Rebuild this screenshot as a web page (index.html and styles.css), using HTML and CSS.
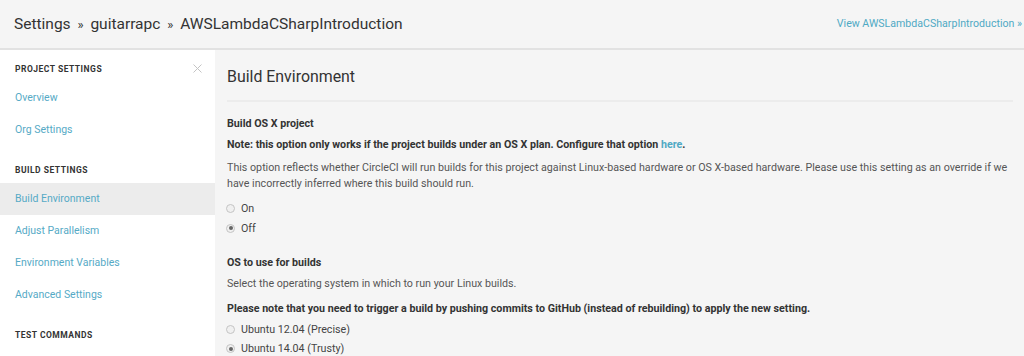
FILE: index.html
```html
<!DOCTYPE html>
<html lang="en">
<head>
    <meta charset="UTF-8">
    <title>Settings - AWSLambdaCSharpIntroduction</title>
    <link rel="stylesheet" href="styles.css">
</head>
<body>
<header class="topbar">
    <h1 class="crumbs">Settings <span class="sep">&raquo;</span> guitarrapc <span class="sep">&raquo;</span> AWSLambdaCSharpIntroduction</h1>
    <a class="view-link" href="#">View AWSLambdaCSharpIntroduction &raquo;</a>
</header>
<div class="layout">
    <aside class="sidebar">
        <div class="nav-title first">
            Project Settings
            <svg class="close" width="9" height="9" viewBox="0 0 9 9"><path d="M0.5 0.5L8.5 8.5M8.5 0.5L0.5 8.5" stroke="#c4c4c4" stroke-width="1"/></svg>
        </div>
        <a class="nav-item" href="#">Overview</a>
        <a class="nav-item" href="#">Org Settings</a>

        <div class="nav-title">Build Settings</div>
        <a class="nav-item active" href="#">Build Environment</a>
        <a class="nav-item" href="#">Adjust Parallelism</a>
        <a class="nav-item" href="#">Environment Variables</a>
        <a class="nav-item" href="#">Advanced Settings</a>

        <div class="nav-title">Test Commands</div>
    </aside>
    <main class="content">
        <h2 class="page-title">Build Environment</h2>

        <section class="setting">
            <h3>Build OS X project</h3>
            <p class="strong">Note: this option only works if the project builds under an OS X plan. Configure that option <a href="#">here</a>.</p>
            <p class="desc">This option reflects whether CircleCI will run builds for this project against Linux-based hardware or OS X-based hardware. Please use this setting as an override if we have incorrectly inferred where this build should run.</p>
            <label class="radio"><span class="dot"></span>On</label>
            <label class="radio"><span class="dot checked"></span>Off</label>
        </section>

        <section class="setting second">
            <h3>OS to use for builds</h3>
            <p class="desc single">Select the operating system in which to run your Linux builds.</p>
            <p class="strong">Please note that you need to trigger a build by pushing commits to GitHub (instead of rebuilding) to apply the new setting.</p>
            <label class="radio"><span class="dot"></span>Ubuntu 12.04 (Precise)</label>
            <label class="radio"><span class="dot checked"></span>Ubuntu 14.04 (Trusty)</label>
        </section>
    </main>
</div>
</body>
</html>
```

FILE: styles.css
```css
body {
    margin: 0;
    background-color: #f5f5f5;
    font-family: Roboto, "Liberation Sans", sans-serif;
    color: #333;
    overflow: hidden;
}

a {
    color: #4fa9c4;
    text-decoration: none;
}

.topbar {
    height: 48px;
    border-bottom: 2px solid #e2e2e2;
    display: flex;
    align-items: center;
    justify-content: space-between;
    padding: 0 2px 0 14px;
}

.crumbs {
    margin: 0;
    font-size: 15.5px;
    font-weight: normal;
    color: #333;
}

.crumbs .sep {
    font-size: 13px;
    margin: 0 3px;
}

.view-link {
    font-size: 10.6px;
    margin-top: -2px;
}

.layout {
    display: flex;
}

.sidebar {
    width: 215px;
    flex-shrink: 0;
    background-color: #fff;
    padding-top: 5px;
    height: 306px;
}

.nav-title {
    height: 26px;
    line-height: 26px;
    padding: 0 15px;
    margin-top: 11px;
    font-size: 8.5px;
    font-weight: bold;
    letter-spacing: 0.5px;
    text-transform: uppercase;
    color: #333;
    display: flex;
    justify-content: space-between;
    align-items: center;
}

.nav-title.first {
    margin-top: 1px;
}

.close {
    margin-right: -2px;
    margin-top: -1px;
}

.nav-item {
    display: block;
    height: 32px;
    line-height: 31px;
    padding: 0 15px;
    font-size: 10.5px;
    color: #56aac6;
}

.nav-item.active {
    background-color: #ececec;
}

.content {
    flex: 1;
    padding: 0 11px 0 12px;
}

.page-title {
    margin: 0;
    padding: 16px 0 12px;
    font-size: 15.9px;
    font-weight: normal;
    color: #333;
    line-height: 22px;
    border-bottom: 2px solid #ececec;
}

.setting {
    padding-top: 12px;
}

.setting.second {
    padding-top: 15px;
}

.setting h3 {
    margin: 0;
    font-size: 10.7px;
    font-weight: bold;
    line-height: 20px;
    color: #333;
}

.setting p {
    margin: 0;
    font-size: 10.7px;
    line-height: 17px;
}

.strong {
    font-weight: bold;
    padding-top: 2px;
}

.desc {
    padding-top: 6px;
    color: #555;
}

.desc.single {
    padding-top: 2px;
    padding-bottom: 6px;
}

.setting h3 + .strong {
    padding-top: 2px;
}

.strong + .desc {
    padding-top: 7px;
    line-height: 16px;
}

.desc + .radio {
    margin-top: 6px;
}

.strong + .radio {
    margin-top: 3px;
}

.radio {
    display: flex;
    align-items: center;
    height: 20px;
    font-size: 10.7px;
    color: #444;
}

.second .radio {
    height: 19px;
}

.dot {
    width: 9px;
    height: 9px;
    border-radius: 50%;
    border: 1px solid #c4c4c4;
    background-color: #f0f0f0;
    margin: 0 6px 0 -1px;
    box-sizing: border-box;
    display: flex;
    align-items: center;
    justify-content: center;
}

.dot.checked::after {
    content: "";
    width: 4px;
    height: 4px;
    border-radius: 50%;
    background-color: #666;
}
```
